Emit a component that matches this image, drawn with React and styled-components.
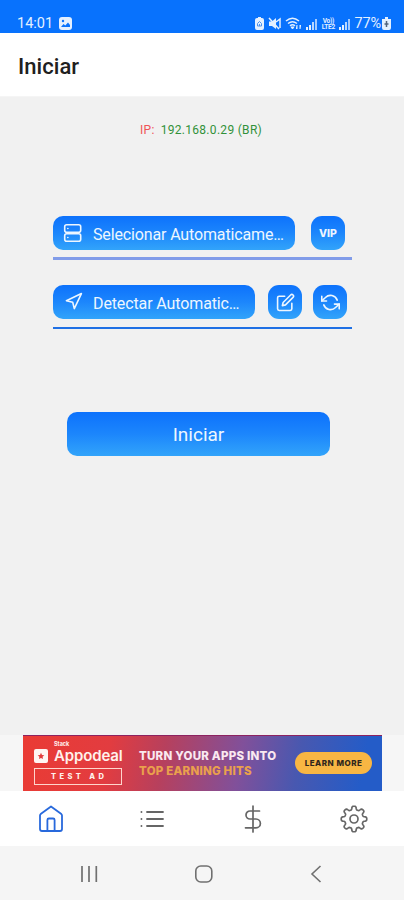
import React from 'react';
import styled, { createGlobalStyle } from 'styled-components';
import { FiNavigation, FiEdit, FiRefreshCcw } from 'react-icons/fi';

const GlobalStyle = createGlobalStyle`
  * { box-sizing: border-box; }
  body { margin: 0; background: #f1f1f1; }
  button { border: 0; padding: 0; font: inherit; color: inherit; }
`;

const Screen = styled.div`
  width: 404px;
  height: 900px;
  display: flex;
  flex-direction: column;
  overflow: hidden;
  background: #f1f1f1;
  font-family: Roboto, sans-serif;
`;

const StatusBar = styled.div`
  height: 33px;
  flex: none;
  display: flex;
  align-items: flex-start;
  justify-content: space-between;
  padding: 15px 13px 0 17px;
  background: #0872fd;
  color: #e4f0ff;
`;

const StatusGroup = styled.div`
  display: flex;
  align-items: center;
  height: 17px;
  gap: ${(p) => p.$gap}px;
`;

const StatusText = styled.span`
  font-size: 14.5px;
  line-height: 17px;
  letter-spacing: ${(p) => p.$spacing || 0}px;
  margin-right: ${(p) => p.$pull || 0}px;
`;

const Header = styled.header`
  height: 64px;
  flex: none;
  display: flex;
  align-items: center;
  padding: 4px 0 0 18px;
  background: #fff;
  border-bottom: 1px solid #f5f5f5;
`;

const Title = styled.h1`
  margin: 0;
  font-size: 22px;
  line-height: 28px;
  font-weight: 500;
  letter-spacing: 0.05px;
  color: #202020;
`;

const Content = styled.main`
  height: 638px;
  flex: none;
  display: flex;
  flex-direction: column;
`;

const Address = styled.div`
  margin-top: 25px;
  padding-left: 140px;
  height: 16px;
  display: flex;
  gap: 6px;
  font-size: 12px;
  line-height: 16px;
  letter-spacing: 0.3px;
  color: #31913a;
`;

const AddressLabel = styled.span`
  color: #f05358;
`;

const Options = styled.section`
  width: 299px;
  margin: 78px 0 0 53px;
`;

const OptionRow = styled.div`
  display: flex;
  height: ${(p) => p.$height}px;
  margin-bottom: ${(p) => p.$after || 0}px;
  border-bottom: ${(p) => p.$line}px solid ${(p) => p.$color};
`;

const GradientButton = styled.button`
  background: linear-gradient(#0d72fc, #1c86fc 50%, #32a4fa);
  color: #edf6ff;
`;

const SelectButton = styled(GradientButton)`
  width: ${(p) => p.$width}px;
  height: 34px;
  flex: none;
  display: flex;
  align-items: center;
  padding-left: 10px;
  gap: 10px;
  border-radius: 10px;
  font-size: 16px;
  letter-spacing: ${(p) => p.$spacing}px;
  white-space: nowrap;
`;

const SelectIcon = styled.span`
  width: 20px;
  height: 21px;
  display: flex;
  justify-content: center;
`;

const SelectLabel = styled.span`
  padding-top: 2px;
`;

const SquareButton = styled(GradientButton)`
  width: 34px;
  height: 34px;
  flex: none;
  display: flex;
  align-items: center;
  justify-content: center;
  margin-left: ${(p) => p.$gap}px;
  border-radius: 11px;
`;

const VipLabel = styled.span`
  font-family: Inter, sans-serif;
  font-size: 10.5px;
  font-weight: 800;
`;

const StartButton = styled(GradientButton)`
  width: 263px;
  height: 44px;
  margin: 83px 0 0 67px;
  padding-top: 1px;
  border-radius: 10px;
  font-size: 19px;
`;

const AdSlot = styled.div`
  height: 56px;
  flex: none;
  padding: 0 22px 0 23px;
  background: #f6f6f6;
`;

const Ad = styled.div`
  height: 56px;
  display: flex;
  border-top: 1px solid #8d2260;
  background: linear-gradient(100deg, #ea3b34 0%, #e23c40 24%, #b7405d 39%, #81509a 60%, #4858b0 76%, #245cc8 94%);
  white-space: nowrap;
`;

const AdBrand = styled.div`
  width: 89px;
  flex: none;
  margin-left: 11px;
  padding-top: 5px;
  color: #fff1ec;
  font-family: Inter, sans-serif;
`;

const Stack = styled.div`
  height: 6px;
  padding-left: 20px;
  font-size: 5.5px;
  line-height: 7px;
  font-weight: 700;
`;

const BrandRow = styled.div`
  height: 18px;
  display: flex;
  align-items: center;
  gap: 6px;
`;

const BrandName = styled.span`
  font-size: 15px;
  line-height: 18px;
  font-weight: 600;
  letter-spacing: -0.15px;
`;

const TestLabel = styled.div`
  width: 88px;
  height: 17px;
  margin-top: 3px;
  border: 1px solid #ffd5cc;
  font-size: 7.5px;
  line-height: 16px;
  font-weight: 800;
  letter-spacing: 3.4px;
  padding-left: 16px;
`;

const AdCopy = styled.div`
  width: 172px;
  flex: none;
  padding: 13px 0 0 16px;
  font-family: Inter, sans-serif;
  font-size: 11.5px;
  font-weight: 800;
  line-height: 15px;
`;

const CopyLine = styled.div`
  color: ${(p) => p.$color};
  letter-spacing: 0.23px;
`;

const LearnButton = styled.button`
  width: 77px;
  height: 22px;
  flex: none;
  margin-top: 16px;
  border-radius: 11px;
  background: #f8b643;
  color: #30261d;
  font-family: Inter, sans-serif;
  font-size: 8px;
  font-weight: 800;
  letter-spacing: 0.5px;
`;

const TabBar = styled.nav`
  height: 55px;
  flex: none;
  display: grid;
  grid-template-columns: repeat(4, 101px);
  background: #fff;
`;

const Tab = styled.div`
  display: flex;
  align-items: center;
  justify-content: center;
  padding-top: 1px;
  color: ${(p) => (p.$active ? '#2869dc' : '#666')};
`;

const SystemBar = styled.div`
  height: 54px;
  flex: none;
  display: flex;
  align-items: center;
  justify-content: space-between;
  padding: 1px 82px 0 80px;
  background: #f5f5f5;
  color: #707070;
`;

const PhotoIcon = () => (
  <svg width="13" height="13" viewBox="0 0 13 13">
    <rect width="13" height="13" rx="3" fill="currentColor" />
    <circle cx="4" cy="4" r="1.2" fill="#0872fd" />
    <path d="M2 10l2.5-3 1.8 1.6L9 5.5l2 2.5v2z" fill="#0872fd" />
  </svg>
);

const RecycleBattery = () => (
  <svg width="9" height="13" viewBox="0 0 9 13">
    <path d="M3 0h3v1h1q2 0 2 2v8q0 2-2 2H2q-2 0-2-2V3q0-2 2-2h1z" fill="currentColor" />
    <path d="M2.5 9V6.5l2-2 2 2V9zM4.5 7v2" fill="none" stroke="#4c93ed" />
  </svg>
);

const MuteIcon = () => (
  <svg width="13" height="13" viewBox="0 0 13 13">
    <path d="M1 4.500h3L8 1v11L4 9H1z" fill="currentColor" />
    <path d="M1 1l10 11M8 5l4-3v9" fill="none" stroke="currentColor" strokeWidth="1.5" />
  </svg>
);

const WifiIcon = () => (
  <svg width="17" height="13" viewBox="0 0 17 13" fill="none" stroke="currentColor" strokeWidth="1.5">
    <path d="M1 4Q7.5-1.5 14 4M3 6.5q4.5-3.5 9 0M5 8.8q2.5-2 5 0" />
    <path d="M6 10l1.5 2L9 10zM12 8v4l-1-1m4 1V8l1 1" strokeWidth="1" fill="currentColor" />
  </svg>
);

const SignalIcon = () => (
  <svg width="11" height="12" viewBox="0 0 11 12" fill="currentColor">
    <path d="M0 9h2v3H0zM3 7h2v5H3z" />
    <path d="M6 4h2v8H6z" opacity=".8" />
    <path d="M9 1h2v11H9z" opacity=".7" />
  </svg>
);

const LteMark = styled.span`
  width: 14px;
  font-size: 6.5px;
  line-height: 6px;
  font-weight: 700;
  text-align: center;
  letter-spacing: -0.3px;
`;

const LockBattery = () => (
  <svg width="9" height="13" viewBox="0 0 9 13">
    <path d="M3 0h3v2h3v9q0 2-2 2H2q-2 0-2-2V2h3z" fill="currentColor" />
    <path d="M4.5 4v6M2.5 7h4" stroke="#52647d" strokeWidth="1.5" />
  </svg>
);

const ServerIcon = () => (
  <svg width="20" height="20" viewBox="0 0 20 20" fill="none" stroke="currentColor" strokeWidth="1.6" strokeLinecap="round">
    <rect x="1.7" y="1.7" width="16" height="7.6" rx="2" />
    <rect x="1.7" y="10.7" width="16" height="7.6" rx="2" />
    <path d="M4.8 5.500h.1M4.800 14.500h.1" />
  </svg>
);

const AppodealMark = () => (
  <svg width="14" height="14" viewBox="0 0 14 14">
    <rect width="14" height="14" rx="2" fill="#fff5f2" />
    <path d="M7 3.8l1 2.1 2.3.3-1.7 1.6.4 2.3-2-1.1-2 1.1.4-2.3-1.7-1.6L6 5.9z" fill="#e23c3c" />
  </svg>
);

const HomeIcon = () => (
  <svg width="26" height="28" viewBox="0 0 26 28" fill="none" stroke="currentColor" strokeWidth="1.8" strokeLinejoin="round">
    <path d="M2 10.5Q2 9.5 3 8.7L13 1.5 23 8.7q1 .8 1 1.8V24q0 2-2 2H4q-2 0-2-2z" />
    <path d="M9.4 26V15q0-1.500 1.500-1.500h4.200q1.500 0 1.500 1.500v11" />
  </svg>
);

const ListIcon = () => (
  <svg width="24" height="18" viewBox="0 0 24 18" stroke="currentColor" strokeWidth="1.8" strokeLinecap="round">
    <path d="M7 2h16M7 9h16M7 16h16M1.4 2h.1M1.4 9h.1M1.4 16h.1" />
  </svg>
);

const DollarIcon = () => (
  <svg width="18" height="28" viewBox="0 0 18 28" fill="none" stroke="currentColor" strokeWidth="1.7" strokeLinecap="round">
    <path d="M9 1v26M15.5 6H6a4 4 0 0 0 0 8h6a4.4 4.4 0 0 1 0 8.8H1.5" />
  </svg>
);

const gearPath = `${Array.from({ length: 144 }, (_, i) => {
  const angle = (i / 144) * Math.PI * 2;
  const radius = 11.1 + 1.7 * Math.tanh(2.2 * Math.cos(8 * angle));
  return `${i ? 'L' : 'M'}${(14 + radius * Math.cos(angle)).toFixed(2)} ${(14 + radius * Math.sin(angle)).toFixed(2)}`;
}).join('')}Z`;

const GearIcon = () => (
  <svg width="28" height="28" viewBox="0 0 28 28" fill="none" stroke="currentColor" strokeWidth="1.7" strokeLinejoin="round">
    <path d={gearPath} />
    <circle cx="14" cy="14" r="4" />
  </svg>
);

const RecentsIcon = () => (
  <svg width="18" height="18" viewBox="0 0 18 18" stroke="currentColor" strokeWidth="1.7">
    <path d="M2 1v16M9 1v16M16.3 1v16" />
  </svg>
);

const SystemHomeIcon = () => (
  <svg width="18" height="18" viewBox="0 0 18 18" fill="none" stroke="currentColor" strokeWidth="1.6">
    <rect x="0.8" y="1" width="16" height="16" rx="5" />
  </svg>
);

const BackIcon = () => (
  <svg width="12" height="18" viewBox="0 0 12 18" fill="none" stroke="currentColor" strokeWidth="1.6">
    <path d="M10.5 1L2 9l8.5 8" />
  </svg>
);

export default function App() {
  return (
    <>
      <GlobalStyle />
      <Screen>
        <StatusBar>
          <StatusGroup $gap={6}>
            <StatusText>14:01</StatusText>
            <PhotoIcon />
          </StatusGroup>
          <StatusGroup $gap={4}>
            <RecycleBattery />
            <MuteIcon />
            <WifiIcon />
            <SignalIcon />
            <LteMark>Vo)) LTE2</LteMark>
            <SignalIcon />
            <StatusText $spacing={-0.1} $pull={-3}>77%</StatusText>
            <LockBattery />
          </StatusGroup>
        </StatusBar>
        <Header>
          <Title>Iniciar</Title>
        </Header>
        <Content>
          <Address>
            <AddressLabel>IP:</AddressLabel>
            <span>192.168.0.29 (BR)</span>
          </Address>
          <Options>
            <OptionRow $height={44} $after={25} $line={3} $color="#819ce9">
              <SelectButton $width={242} $spacing={-0.14}>
                <SelectIcon><ServerIcon /></SelectIcon>
                <SelectLabel>Selecionar Automaticame…</SelectLabel>
              </SelectButton>
              <SquareButton $gap={16}>
                <VipLabel>VIP</VipLabel>
              </SquareButton>
            </OptionRow>
            <OptionRow $height={44} $line={2} $color="#1f70e4">
              <SelectButton $width={202} $spacing={-0.12}>
                <SelectIcon><FiNavigation size={19} /></SelectIcon>
                <SelectLabel>Detectar Automatic…</SelectLabel>
              </SelectButton>
              <SquareButton $gap={13}>
                <FiEdit size={19} />
              </SquareButton>
              <SquareButton $gap={11}>
                <FiRefreshCcw size={19} />
              </SquareButton>
            </OptionRow>
          </Options>
          <StartButton>Iniciar</StartButton>
        </Content>
        <AdSlot>
          <Ad>
            <AdBrand>
              <Stack>Stack</Stack>
              <BrandRow>
                <AppodealMark />
                <BrandName>Appodeal</BrandName>
              </BrandRow>
              <TestLabel>TEST AD</TestLabel>
            </AdBrand>
            <AdCopy>
              <CopyLine $color="#fae9f0">TURN YOUR APPS INTO</CopyLine>
              <CopyLine $color="#eaa04c">TOP EARNING HITS</CopyLine>
            </AdCopy>
            <LearnButton>LEARN MORE</LearnButton>
          </Ad>
        </AdSlot>
        <TabBar>
          <Tab $active><HomeIcon /></Tab>
          <Tab><ListIcon /></Tab>
          <Tab><DollarIcon /></Tab>
          <Tab><GearIcon /></Tab>
        </TabBar>
        <SystemBar>
          <RecentsIcon />
          <SystemHomeIcon />
          <BackIcon />
        </SystemBar>
      </Screen>
    </>
  );
}
